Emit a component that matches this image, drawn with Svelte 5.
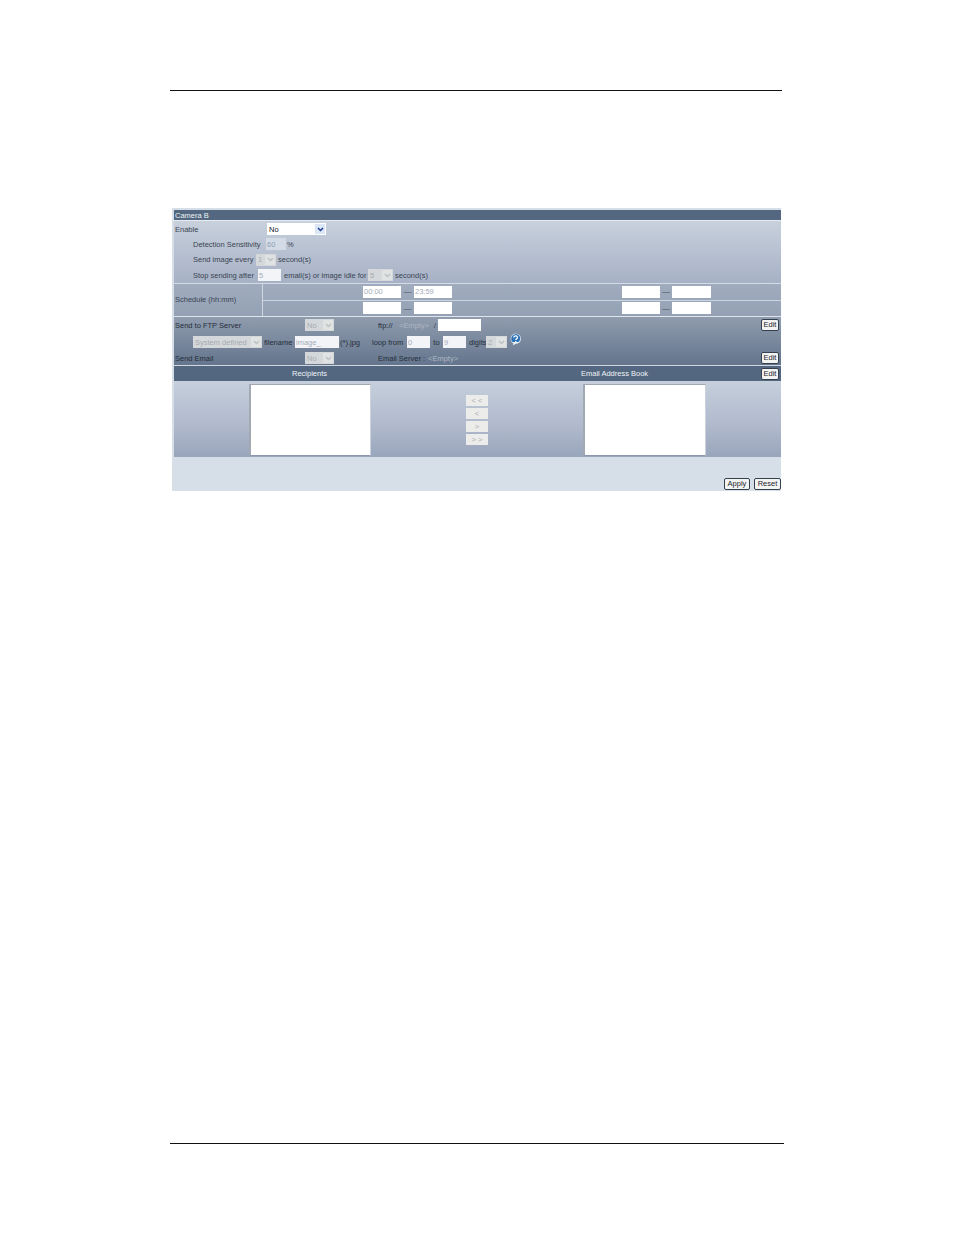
<script>
  const editLabel = 'Edit';
</script>

{#snippet sel(value, cls, enabled = false)}
  <div class="sel {cls}" class:on={enabled}>
    <select disabled={!enabled}><option>{value}</option></select>
    <span class="arrow">
      <svg width="7" height="5" viewBox="0 0 7 5" aria-hidden="true"><path d="M1 1l2.5 2.5L6 1" fill="none" stroke="currentColor" stroke-width="1.5" /></svg>
    </span>
  </div>
{/snippet}

{#snippet times(a, b, c, d)}
  <div class="sched-row">
    <input class="time t1" disabled value={a} />
    <span class="dash">—</span>
    <input class="time t2" disabled value={b} />
    <input class="time t3" disabled value={c} />
    <span class="dash d2">—</span>
    <input class="time t4" disabled value={d} />
  </div>
{/snippet}

<div class="page">
  <hr class="rule top" />

  <div class="panel">
    <div class="inner">
      <div class="bar title">Camera B</div>

      <div class="group g1">
        <div class="row r-enable">
          <span class="lbl w-enable">Enable</span>
          {@render sel('No', 'enable', true)}
        </div>
        <div class="row r-sens sub">
          <span class="lbl w-sens">Detection Sensitivity</span>
          <input class="field f-sens" disabled value="60" />
          <span class="lbl">%</span>
        </div>
        <div class="row r-every sub">
          <span class="lbl w-every">Send image every</span>
          {@render sel('1', 'num')}
          <span class="lbl">second(s)</span>
        </div>
        <div class="row r-stop sub">
          <span class="lbl w-stop">Stop sending after</span>
          <input class="field f-stop" disabled value="5" />
          <span class="lbl w-mails">email(s) or image idle for</span>
          {@render sel('5', 'num idle')}
          <span class="lbl">second(s)</span>
        </div>
      </div>

      <div class="schedule">
        <div class="sched-label lbl">Schedule (hh:mm)</div>
        <div class="sched-cells">
          {@render times('00:00', '23:59', '', '')}
          {@render times('', '', '', '')}
        </div>
      </div>

      <div class="group g3">
        <div class="row r-ftp">
          <span class="lbl w-send">Send to FTP Server</span>
          {@render sel('No', 'yn')}
          <span class="lbl ftp w-ftp">ftp://</span>
          <span class="lbl muted w-empty">&lt;Empty&gt;</span>
          <span class="lbl slash">/</span>
          <input class="field f-path" disabled />
          <button class="edit">{editLabel}</button>
        </div>
        <div class="row r-file">
          {@render sel('System defined', 'sys')}
          <span class="lbl fn">filename</span>
          <input class="field f-name" disabled value="image_" />
          <span class="lbl ext">(*).jpg</span>
          <span class="lbl loop">loop from</span>
          <input class="field f-loop" disabled value="0" />
          <span class="lbl to">to</span>
          <input class="field f-loop" disabled value="9" />
          <span class="lbl digits">digits</span>
          {@render sel('2', 'dig')}
          <svg class="help" width="13" height="13" viewBox="0 0 13 13" aria-hidden="true">
            <path d="M6.5.4a5.500 5.500 0 0 1 5.500 5.300c0 3-2.500 5.100-5.300 5.100L4 12.600l.3-2.200A5.400 5.400 0 0 1 6.500.4z" fill="#e8eff7" />
            <path d="M6.500 1a4.800 4.800 0 0 1 4.800 4.600c0 1.500-.7 2.700-1.800 3.500H3.500A4.800 4.800 0 0 1 6.500 1z" fill="#2f74b8" />
            <path d="M4.700 4.500c.2-1.100 1-1.600 1.900-1.600 1.200 0 1.900.7 1.900 1.500 0 1.300-1.700 1.400-1.700 2.600" fill="none" stroke="#fff" stroke-width="1.300" />
            <circle cx="6.800" cy="8.700" r=".8" fill="#fff" />
          </svg>
        </div>
        <div class="row r-mail">
          <span class="lbl w-send">Send Email</span>
          {@render sel('No', 'yn')}
          <span class="lbl ftp w-server">Email Server :</span>
          <span class="lbl muted">&lt;Empty&gt;</span>
          <button class="edit">{editLabel}</button>
        </div>
      </div>

      <div class="bar lists-head">
        <span class="head-a">Recipients</span>
        <span class="head-b">Email Address Book</span>
        <button class="edit">{editLabel}</button>
      </div>

      <div class="lists">
        <div class="listbox box-a"></div>
        <div class="movers">
          <button disabled>&lt; &lt;</button>
          <button disabled>&lt;</button>
          <button disabled>&gt;</button>
          <button disabled>&gt; &gt;</button>
        </div>
        <div class="listbox box-b"></div>
      </div>
    </div>

    <div class="actions">
      <button class="edit">Apply</button>
      <button class="edit reset">Reset</button>
    </div>
  </div>

  <hr class="rule bottom" />
</div>

<style>
  :global(body) {
    margin: 0;
    background: #fff;
  }

  .page {
    width: 954px;
    height: 1235px;
    padding-top: 90px;
    box-sizing: border-box;
    font-family: "Liberation Sans", Arial, sans-serif;
    font-size: 7.5px;
    color: #3a4451;
  }

  .rule {
    height: 1px;
    margin: 0 0 0 170px;
    border: 0;
    background: #111;
  }

  .rule.top {
    width: 612px;
  }

  .rule.bottom {
    width: 614px;
    margin-top: 652px;
  }

  .panel {
    width: 609px;
    height: 283px;
    margin: 117px 0 0 172px;
    padding-top: 2px;
    box-sizing: border-box;
    background: #d6dee8;
    display: flex;
    flex-direction: column;
  }

  .inner {
    margin-left: 2px;
  }

  .bar {
    background: #536880;
    color: #eef2f6;
  }

  .title {
    height: 10px;
    line-height: 11px;
    padding-left: 1px;
    border-bottom: 1px solid #e6ebf1;
  }

  .row {
    display: flex;
    align-items: center;
  }

  .lbl {
    white-space: nowrap;
  }

  .group.g1 {
    height: 61px;
    padding-top: 1px;
    background: linear-gradient(#c8d0dc, #a7b1c6);
    border-bottom: 1px solid #d4dbe4;
  }

  .r-enable {
    height: 14px;
    padding-left: 1px;
  }

  .w-enable {
    width: 92px;
  }

  .sub {
    padding-left: 19px;
    height: 15.5px;
  }

  .r-sens {
    margin-top: 0.5px;
  }

  .w-sens {
    width: 73px;
  }

  .f-sens {
    width: 20px;
    margin-right: 1px;
  }

  .w-every {
    width: 63px;
  }

  .r-every .lbl:last-child {
    margin-left: 2px;
  }

  .w-stop {
    width: 65px;
  }

  .f-stop {
    width: 23px;
    margin-right: 3px;
  }

  .w-mails {
    width: 84px;
  }

  .schedule {
    display: flex;
    height: 32px;
    background: linear-gradient(#a0acbe, #94a1b4);
    border-bottom: 1px solid #dfe5ec;
  }

  .sched-label {
    width: 89px;
    box-sizing: border-box;
    padding-left: 1px;
    line-height: 32px;
    border-right: 1px solid #d0d7e0;
  }

  .sched-cells {
    flex: 1;
  }

  .sched-row {
    height: 15.5px;
    display: flex;
    align-items: center;
  }

  .sched-row:first-child {
    border-bottom: 1px solid #ccd4de;
  }

  .time {
    width: 38px;
    height: 13px;
  }

  .t1 {
    margin-left: 100px;
  }

  .t3 {
    margin-left: 170px;
  }

  .dash {
    width: 13px;
    text-align: center;
    font-size: 8px;
    color: #44505e;
  }

  .dash.d2 {
    width: 12px;
  }

  .t4 {
    width: 39px;
  }

  .group.g3 {
    height: 48px;
    background: linear-gradient(#909cae, #64758d);
    border-bottom: 1px solid #cfd7e1;
    display: flex;
    flex-direction: column;
  }

  .r-ftp {
    height: 16px;
  }

  .r-file {
    height: 18px;
    padding-left: 19px;
  }

  .r-mail {
    height: 14px;
  }

  .w-send {
    width: 131px;
    padding-left: 1px;
    box-sizing: border-box;
    color: #252e3a;
  }

  .ftp {
    margin-left: 44px;
    color: #252e3a;
  }

  .muted {
    color: #aeb7c4;
  }

  .w-ftp {
    width: 21px;
  }

  .w-empty {
    width: 35px;
  }

  .w-server {
    width: 50px;
  }

  .slash {
    width: 4px;
  }

  .f-path {
    width: 43px;
  }

  .edit {
    width: 18px;
    height: 12px;
    padding: 0;
    margin-left: auto;
    margin-right: 2px;
    border: 1px solid #33404f;
    border-radius: 2px;
    background: #f3f4f2;
    font: 7.5px/10px "Liberation Sans", Arial, sans-serif;
    color: #1c2430;
  }

  .field, .time {
    box-sizing: border-box;
    height: 12px;
    padding: 0 1px;
    border: 0;
    background: #fff;
    font: 7.5px "Liberation Sans", Arial, sans-serif;
    color: #a4adba;
    opacity: 1;
  }

  .f-sens {
    background: #d3dbe6;
    color: #929fb3;
  }

  .f-stop, .f-name, .f-loop {
    background: #f2f4f7;
  }

  .fn {
    width: 29px;
    margin: 0 2px;
    color: #252e3a;
  }

  .f-name {
    width: 44px;
  }

  .ext {
    width: 22px;
    margin-left: 1px;
    color: #252e3a;
  }

  .loop {
    width: 33px;
    margin: 0 2px 0 10px;
    color: #252e3a;
  }

  .f-loop {
    width: 23px;
  }

  .to {
    width: 13px;
    text-align: center;
    color: #252e3a;
  }

  .digits {
    width: 17px;
    margin-left: 3px;
    color: #252e3a;
  }

  .help {
    margin: -5px 0 0 2px;
  }

  .sel {
    position: relative;
    height: 12px;
  }

  .sel select {
    display: block;
    width: 100%;
    height: 100%;
    padding: 0 0 0 2px;
    border: 0;
    border-radius: 0;
    appearance: none;
    background: #d5d8da;
    font: 7.5px "Liberation Sans", Arial, sans-serif;
    color: #a6aaaf;
    opacity: 1;
  }

  .sel.on select {
    background: #fff;
    color: #10161e;
  }

  .arrow {
    position: absolute;
    top: 1px;
    right: 1px;
    bottom: 1px;
    width: 10px;
    display: flex;
    align-items: center;
    justify-content: center;
    background: #e1e3e3;
    color: #bcc1c6;
  }

  .sel.on .arrow {
    background: #dbe6f7;
    color: #1c3f94;
  }

  .sel.enable {
    width: 59px;
  }

  .sel.num {
    width: 20px;
  }

  .sel.idle {
    width: 25px;
    margin-right: 2px;
  }

  .sel.yn {
    width: 29px;
  }

  .sel.sys {
    width: 69px;
  }

  .sel.dig {
    width: 21px;
  }

  .lists-head {
    height: 15px;
    line-height: 15px;
    display: flex;
    align-items: center;
  }

  .head-a {
    width: 289px;
    margin-left: 118px;
  }

  .lists {
    height: 76px;
    display: flex;
    align-items: flex-start;
    background: linear-gradient(#c6cfdc, #b0b9cc 60%, #98a5bb);
  }

  .listbox {
    width: 122px;
    height: 72px;
    box-sizing: border-box;
    margin-top: 3px;
    background: #fff;
    border-style: solid;
    border-width: 1px 1px 1px 2px;
    border-color: #a3a9b2 #cdd3dc #8b98ae #a3a9b2;
  }

  .box-a {
    margin-left: 75px;
  }

  .box-b {
    width: 123px;
  }

  .movers {
    width: 212px;
    padding: 14px 0 0 95px;
    box-sizing: border-box;
    display: flex;
    flex-direction: column;
    gap: 2px;
  }

  .movers button {
    width: 22px;
    height: 11px;
    padding: 0;
    border: 0;
    background: #ececea;
    font: 7.5px/11px "Liberation Sans", Arial, sans-serif;
    color: #a9acb0;
  }

  .actions {
    flex: 1;
    display: flex;
    justify-content: flex-end;
    align-items: flex-end;
    gap: 4px;
    padding-bottom: 1px;
  }

  .actions .edit {
    width: 26px;
    margin: 0;
  }

  .actions .reset {
    width: 27px;
  }
</style>
